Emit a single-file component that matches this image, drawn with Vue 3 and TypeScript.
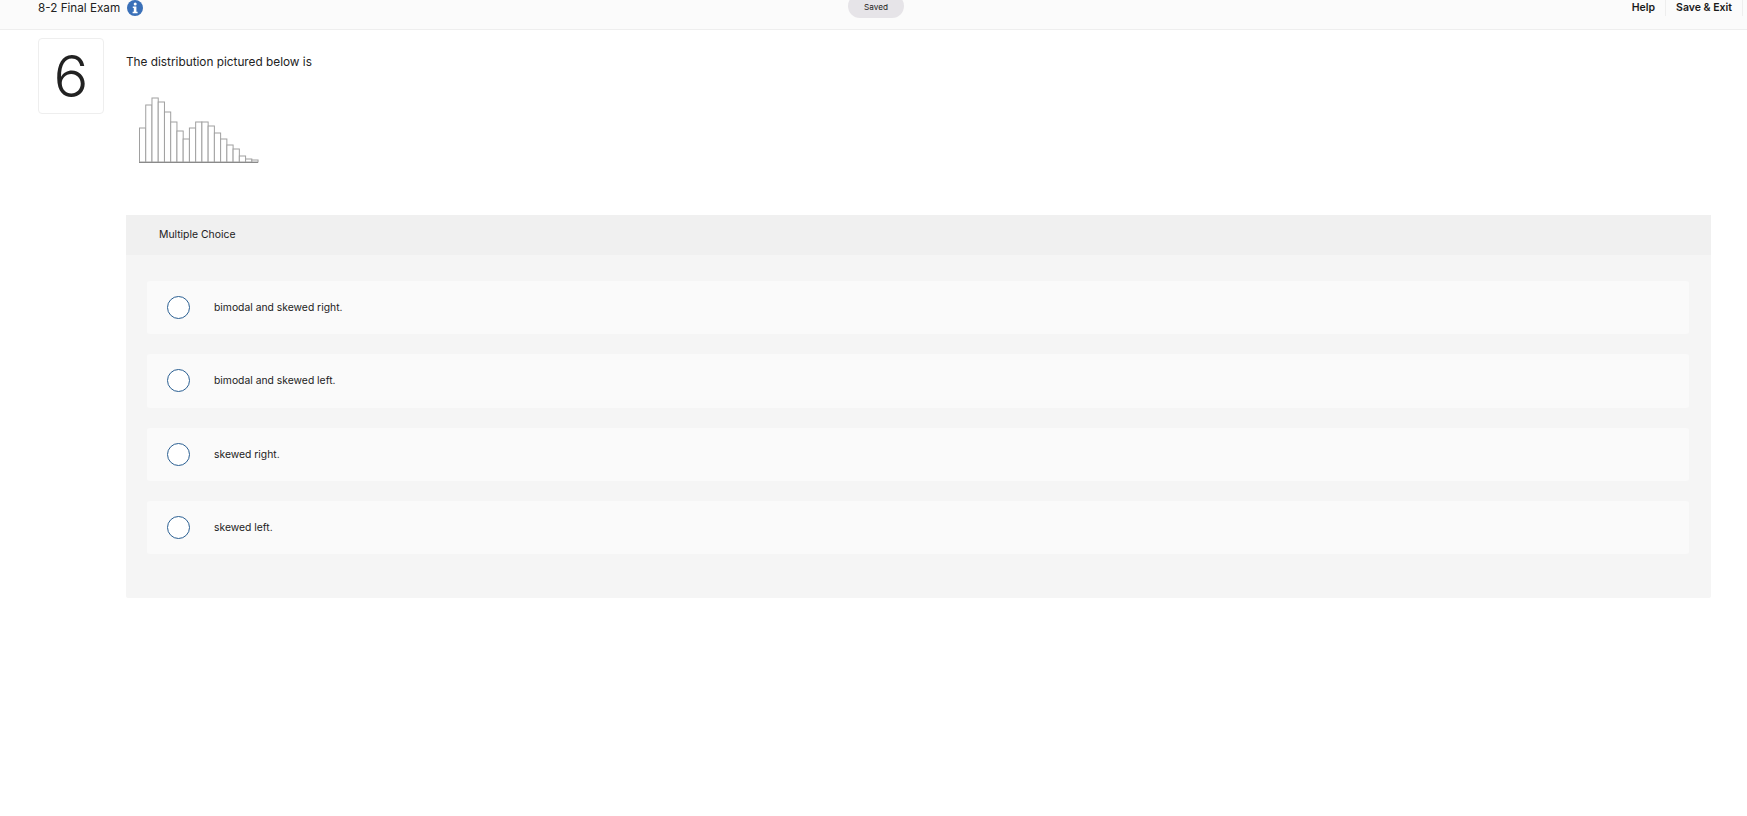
<script setup lang="ts">
const options: string[] = [
  'bimodal and skewed right.',
  'bimodal and skewed left.',
  'skewed right.',
  'skewed left.',
]

const tops: number[] = [48, 25, 18, 22, 32, 42, 51, 59, 48, 42, 42, 46, 53, 59, 65, 69, 76, 79, 80]
const barWidth = 6.24
const baseY = 82
const bars = tops.map((_, i) => i)
</script>

<template>
  <div class="page">
    <header class="bar">
      <div class="bar__left">
        <span class="bar__title">8-2 Final Exam</span>
        <svg class="bar__info" width="16" height="16" viewBox="0 0 16 16">
          <circle cx="8" cy="8" r="8" fill="#3a70b8" />
          <circle cx="8.2" cy="4" r="1.5" fill="#fff" />
          <path d="M5.8 6.6h3.6v5.2h1.2v1.5H5.6v-1.5h1.2V8.1h-1z" fill="#fff" />
        </svg>
      </div>
      <div class="bar__saved">Saved</div>
      <nav class="bar__nav">
        <a class="bar__link">Help</a>
        <a class="bar__link">Save &amp; Exit</a>
      </nav>
    </header>

    <main class="main">
      <div class="num">6</div>
      <div class="body">
        <p class="question">The distribution pictured below is</p>
        <svg class="hist" width="130" height="90" viewBox="0 0 130 90">
          <rect
            v-for="i in bars"
            :key="i"
            :x="9.5 + i * barWidth"
            :y="tops[i]"
            :width="barWidth"
            :height="baseY - tops[i]"
            fill="#fff"
            stroke="#a0a0a0"
            stroke-width="1"
          />
          <path d="M9 82.5H128" stroke="#8a8a8a" stroke-width="1" fill="none" />
        </svg>

        <section class="card">
          <div class="card__head">Multiple Choice</div>
          <div class="card__list">
            <label v-for="o in options" :key="o" class="opt">
              <span class="opt__radio"></span>
              <span class="opt__text">{{ o }}</span>
            </label>
          </div>
        </section>
      </div>
    </main>
  </div>
</template>

<style scoped>
.page {
  height: 816px;
  overflow: hidden;
  background: #fff;
  font-family: Inter, Lato, sans-serif;
  color: #222;
}

.bar {
  height: 29px;
  box-sizing: content-box;
  display: grid;
  grid-template-columns: 810px 56px 1fr;
  padding-left: 38px;
  background: #fbfbfb;
  border-bottom: 1px solid #eeeeee;
  overflow: hidden;
}

.bar__left {
  display: flex;
  align-items: center;
  gap: 7px;
  height: 16px;
}

.bar__title {
  font-size: 11.7px;
  line-height: 16px;
}

.bar__saved {
  height: 24px;
  margin-top: -6px;
  border-radius: 12px;
  background: #e6e4e8;
  font-size: 8.2px;
  line-height: 26px;
  text-align: center;
}

.bar__nav {
  display: flex;
  justify-content: flex-end;
  align-items: flex-start;
  padding-right: 4px;
}

.bar__link {
  height: 16px;
  padding: 0 10px;
  border-right: 1px solid #eeeeee;
  font-size: 10.5px;
  font-weight: 600;
  line-height: 16px;
  color: #1a1a1a;
}

.main {
  display: flex;
  align-items: flex-start;
  padding: 8px 36px 0 38px;
}

.num {
  flex: none;
  width: 64px;
  height: 74px;
  margin-right: 22px;
  border: 1px solid #eeeeee;
  border-radius: 4px;
  font-size: 58px;
  font-weight: 300;
  line-height: 74px;
  text-align: center;
  color: #222;
}

.body {
  flex: 1;
  min-width: 0;
}

.question {
  margin: 15px 0 0;
  font-size: 11.8px;
  line-height: 18px;
}

.hist {
  display: block;
  margin: 9px 0 0 4px;
}

.card {
  margin-top: 45px;
  height: 383px;
  background: #f5f5f5;
  border-radius: 2px;
}

.card__head {
  height: 40px;
  padding-left: 33px;
  background: #f0f0f0;
  font-size: 10.4px;
  line-height: 40px;
}

.card__list {
  display: flex;
  flex-direction: column;
  gap: 20px;
  padding: 26px 22px 0 21px;
}

.opt {
  display: flex;
  align-items: center;
  height: 53.3px;
  padding-left: 20px;
  background: #fafafa;
  border-radius: 3px;
}

.opt__radio {
  flex: none;
  box-sizing: border-box;
  width: 23px;
  height: 23px;
  margin-right: 24px;
  border: 1.5px solid #2a5f92;
  border-radius: 50%;
  background: #fff;
}

.opt__text {
  padding-bottom: 1px;
  font-size: 10.35px;
}
</style>

<style>
html,
body {
  margin: 0;
  background: #fff;
}
</style>
